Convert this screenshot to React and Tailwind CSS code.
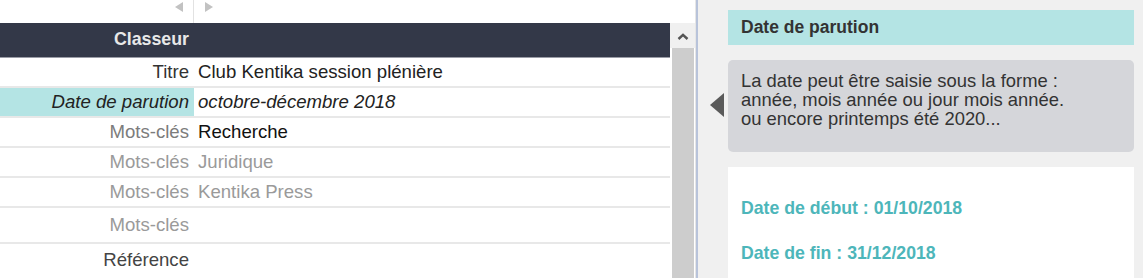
import React from "react";

const rows = [
  { label: "Titre", value: "Club Kentika session plénière", labelClass: "text-[#333]", valueClass: "text-[#222]" },
  { label: "Date de parution", value: "octobre-décembre 2018", labelClass: "italic text-[#222] bg-[#b4e4e4]", valueClass: "italic text-[#222]" },
  { label: "Mots-clés", value: "Recherche", labelClass: "text-[#7c7c7c]", valueClass: "text-[#111]" },
  { label: "Mots-clés", value: "Juridique", labelClass: "text-[#9a9a9a]", valueClass: "text-[#9a9a9a]" },
  { label: "Mots-clés", value: "Kentika Press", labelClass: "text-[#9a9a9a]", valueClass: "text-[#9a9a9a]" },
  { label: "Mots-clés", value: "", labelClass: "text-[#9a9a9a]", valueClass: "", tall: true },
];

const FieldRow = ({ label, value, labelClass, valueClass, tall }) => (
  <div className={`flex border-b-2 border-[#e8e8e8] ${tall ? "h-[36px]" : "h-[30px]"}`}>
    <div className={`w-[194px] shrink-0 flex items-center justify-end pr-[5px] ${labelClass}`}>
      {label}
    </div>
    <div className={`flex items-center pl-[4px] ${valueClass}`}>{value}</div>
  </div>
);

export default function App() {
  return (
    <div
      className="flex h-[278px] w-[1143px] overflow-hidden bg-white text-[18.6px] leading-none"
      style={{ fontFamily: '"Liberation Sans", Arial, sans-serif' }}
    >
      {/* left: record editor */}
      <div className="w-[695px] shrink-0 flex flex-col">
        <div className="h-[23px] shrink-0 flex">
          <div className="w-[194px] flex items-start justify-end pt-[2px] pr-[10px] border-r border-[#e2e2e2]">
            <svg width="8" height="10" viewBox="0 0 8 10">
              <path d="M8 0 L0 5 L8 10 Z" fill="#c2c2c2" />
            </svg>
          </div>
          <div className="flex items-start pt-[2px] pl-[11px]">
            <svg width="8" height="10" viewBox="0 0 8 10">
              <path d="M0 0 L8 5 L0 10 Z" fill="#c2c2c2" />
            </svg>
          </div>
        </div>
        <div className="flex flex-1">
          <div className="w-[670px] shrink-0 flex flex-col">
            <div className="h-[35px] shrink-0 flex bg-[#333848] border-b border-[#9a9ca6]">
              <div className="w-[194px] flex items-center justify-end pr-[5px] font-bold text-[17.8px] text-[#e8e8e8]">
                Classeur
              </div>
            </div>
            {rows.map((r, i) => (
              <FieldRow key={i} {...r} />
            ))}
            <div className="h-[32px] flex">
              <div className="w-[194px] flex items-center justify-end pr-[5px] text-[#444]">
                Référence
              </div>
            </div>
          </div>
          {/* scrollbar */}
          <div className="w-[25px] shrink-0 flex flex-col">
            <div className="h-[25px] bg-[#f0f0f0] flex items-center justify-center pt-[2px]">
              <svg width="12" height="7" viewBox="0 0 12 7">
                <path d="M1.5 6 L6 1.8 L10.5 6" fill="none" stroke="#555" strokeWidth="2.4" />
              </svg>
            </div>
            <div className="flex-1 bg-white pl-[2px] pr-[1px]">
              <div className="h-full bg-[#cdcdcd]" />
            </div>
          </div>
        </div>
      </div>

      {/* divider */}
      <div className="w-[1px] shrink-0 bg-[#e6e6e6]" />
      <div className="w-[2px] shrink-0 bg-[#b8c3da]" />

      {/* right: help panel */}
      <div className="flex-1 bg-[#f0f0f0] pl-[30px] pr-[9px] pt-[10px] flex flex-col">
        <div className="h-[35px] shrink-0 bg-[#b4e4e4] flex items-center pl-[13px] font-bold text-[17.5px] text-[#333]">
          Date de parution
        </div>
        <div className="relative mt-[15px] rounded-[5px] bg-[#d5d6da] pl-[13px] pt-[11px] pb-[24px] text-[18.4px] leading-[19px] text-[#333]">
          <svg
            className="absolute left-[-18px] top-[33px]"
            width="14"
            height="24"
            viewBox="0 0 14 24"
          >
            <path d="M14 0 L0 12 L14 24 Z" fill="#5a5a5a" />
          </svg>
          <div>La date peut être saisie sous la forme :</div>
          <div>année, mois année ou jour mois année.</div>
          <div>ou encore printemps été 2020...</div>
        </div>
        <div className="mt-[15px] flex-1 bg-white pl-[13px] pt-[31px] font-bold text-[17.7px] text-[#4db6ba]">
          <div className="leading-[20px]">Date de début : 01/10/2018</div>
          <div className="mt-[25px] leading-[20px]">Date de fin : 31/12/2018</div>
        </div>
      </div>
    </div>
  );
}
